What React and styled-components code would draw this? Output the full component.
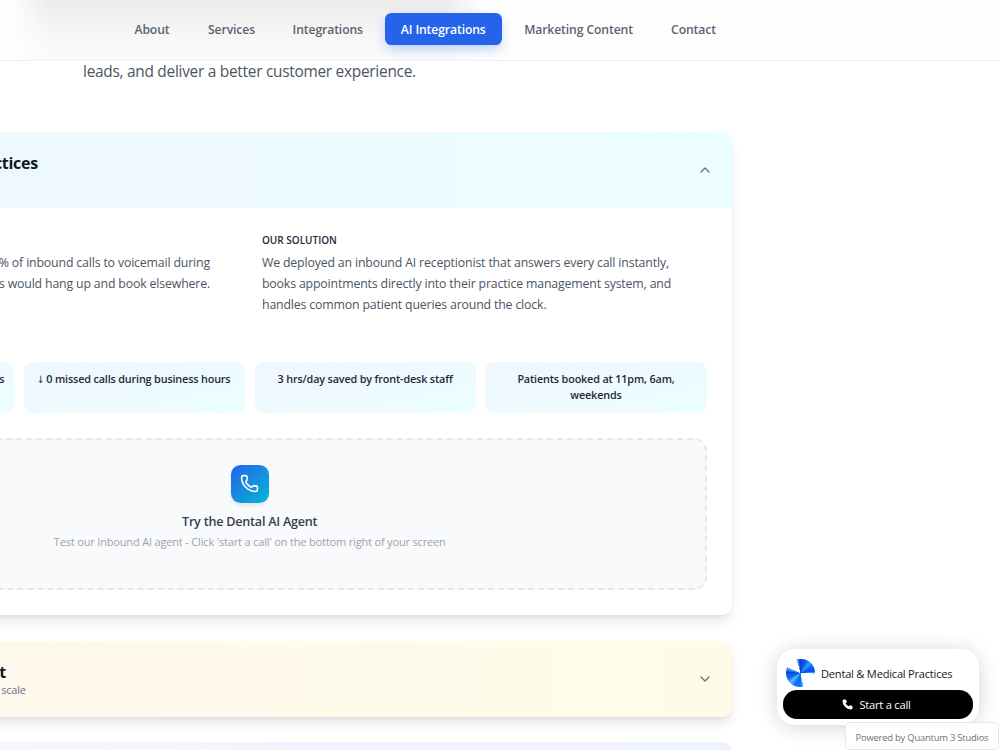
import React from 'react';
import styled, { createGlobalStyle } from 'styled-components';
import { ChevronDown, ChevronUp, Phone } from 'lucide-react';

const GlobalStyle = createGlobalStyle`
	* {
		box-sizing: border-box;
	}

	html, body {
		margin: 0;
		height: 750px;
		overflow: hidden;
		background: #ffffff;
	}

	body {
		font-family: "Segoe UI", "Open Sans", "Noto Sans", sans-serif;
		color: #4b5563;
	}

	p, h2, h3, h4 {
		margin: 0;
	}
`;

const Page = styled.div`
	width: 1000px;
	height: 750px;
	overflow: hidden;
`;

const Header = styled.header`
	position: relative;
	height: 61px;
	padding: 12.5px 0 0 118px;
	overflow: hidden;
	background: #fefefe;
	border-bottom: 1px solid #f0f1f3;

	&::before {
		content: "";
		position: absolute;
		left: 30px;
		top: -30px;
		width: 435px;
		height: 110px;
		background: linear-gradient(to bottom, #e9e9e9 24%, #f3f3f3 46%, #fafafa 70%, #fcfcfc);
		filter: blur(13px);
	}
`;

const Nav = styled.nav`
	position: relative;
	display: flex;
	gap: 6px;
`;

const NavLink = styled.a`
	display: flex;
	align-items: center;
	justify-content: center;
	width: ${p => p.$width}px;
	height: 32px;
	padding-top: 1px;
	border-radius: 6.4px;
	font-size: 12.2px;
	font-weight: 600;
	letter-spacing: -0.12px;
	white-space: nowrap;
	color: ${p => (p.$active ? '#ffffff' : '#5b6472')};
	background: ${p => (p.$active ? '#2563eb' : 'transparent')};
	box-shadow: ${p => (p.$active ? '0 5px 12px -1px rgba(37, 99, 235, 0.3)' : 'none')};
`;

const Intro = styled.p`
	height: 71px;
	padding: 0.6px 0 0 83px;
	font-size: 15.4px;
	line-height: 20px;
	letter-spacing: -0.26px;
	white-space: nowrap;
`;

const CardList = styled.main`
	display: flex;
	flex-direction: column;
	gap: 25.6px;
	width: 965px;
	margin-left: -232.8px;
`;

const Card = styled.section`
	flex: none;
	border-radius: 9.6px;
	overflow: hidden;
	background: #ffffff;
	box-shadow: 0 8px 12px -2.4px rgba(0, 0, 0, 0.1), 0 3.2px 4.8px -3.2px rgba(0, 0, 0, 0.1);
`;

const CardHead = styled.div`
	display: flex;
	align-items: center;
	justify-content: space-between;
	height: 76.1px;
	padding: 0 19.4px 0 25.6px;
	background: linear-gradient(to right, ${p => p.$from}, ${p => p.$to});
	color: #6b7280;
`;

const Heading = styled.div`
	display: flex;
	flex-direction: column;
	align-items: flex-end;
	align-self: flex-start;
	width: ${p => p.$width}px;
	padding-top: 20px;
	white-space: nowrap;
`;

const Title = styled.h2`
	font-size: 16px;
	line-height: 22px;
	font-weight: 700;
	letter-spacing: -0.3px;
	color: #111827;
`;

const Subtitle = styled.p`
	margin-right: -20px;
	font-size: 11px;
	line-height: 14px;
	letter-spacing: -0.2px;
	color: #6b7280;
`;

const CardBody = styled.div`
	height: 407px;
	padding: 25.6px;
`;

const Columns = styled.div`
	display: grid;
	grid-template-columns: 443.6px 443.6px;
	gap: 25.6px;
	height: 128px;
`;

const Column = styled.div`
	padding-right: ${p => (p.$clipped ? '26.4px' : '0')};
	text-align: ${p => (p.$clipped ? 'right' : 'left')};
	white-space: nowrap;
`;

const Label = styled.h4`
	font-size: 10px;
	line-height: 13px;
	font-weight: 600;
	letter-spacing: 0;
	color: #1f2937;
`;

const Line = styled.p`
	font-size: 12.3px;
	line-height: 20.6px;
	letter-spacing: -0.15px;

	${Label} + & {
		margin-top: 6.8px;
	}
`;

const Stats = styled.div`
	display: grid;
	grid-template-columns: repeat(4, 1fr);
	gap: 9.6px;
	height: 49.6px;
`;

const Stat = styled.div`
	padding: 9.6px;
	border-radius: 9px;
	background: linear-gradient(to bottom right, #eff6ff, #ecfeff);
	font-size: 10.8px;
	line-height: 16px;
	font-weight: 600;
	letter-spacing: -0.15px;
	text-align: ${p => (p.$clipped ? 'right' : 'center')};
	white-space: nowrap;
	color: #1f2937;
`;

const Arrow = styled.span`
	font-family: "DejaVu Sans Condensed", "DejaVu Sans", sans-serif;
	font-size: 10px;
	font-weight: 400;
	letter-spacing: -2px;
	margin: 0 1px 0 -1px;
`;

const Demo = styled.div`
	display: flex;
	flex-direction: column;
	align-items: center;
	height: 152.4px;
	margin-top: 26.4px;
	padding-top: 25px;
	border: 2px dashed #e5e7eb;
	border-radius: 12.8px;
	background: #f9fafb;
`;

const PhoneTile = styled.div`
	display: flex;
	align-items: center;
	justify-content: center;
	width: 38.4px;
	height: 38.4px;
	border-radius: 9.6px;
	background: linear-gradient(to bottom right, #2563eb, #06b6d4);
	color: #ffffff;
	box-shadow: 0 3px 5px -1px rgba(0, 0, 0, 0.1);
`;

const DemoTitle = styled.h3`
	margin-top: 9.4px;
	font-size: 12.6px;
	line-height: 20px;
	font-weight: 600;
	letter-spacing: -0.23px;
	color: #374151;
`;

const DemoText = styled.p`
	font-size: 11px;
	line-height: 20.6px;
	letter-spacing: -0.17px;
	color: #9ca3af;
`;

const Widget = styled.aside`
	position: absolute;
	left: 777px;
	top: 649px;
	width: 202px;
	height: 76px;
	padding: 9px 6px 6px;
	border-radius: 18px;
	background: #ffffff;
	box-shadow: 0 2px 20px rgba(0, 0, 0, 0.17);
`;

const WidgetHead = styled.div`
	display: flex;
	align-items: center;
	gap: 6.5px;
	height: 32.4px;
	padding: 0 0 2.4px 3px;
	font-size: 11.1px;
	letter-spacing: -0.22px;
	white-space: nowrap;
	color: #171717;
`;

const Orb = styled.div`
	width: 28.5px;
	height: 28.5px;
	border-radius: 50%;
	background: conic-gradient(
		from -17deg,
		#7cc4f5 0deg, #0a3fc4 14deg, #0a55ea 38deg, #2f9bff 60deg, #0868fa 76deg, #0050e6 100deg, #8fd3ff 109deg,
		transparent 110deg 184deg,
		#6cc5f5 185deg, #0d6df5 198deg, #0872ff 222deg, #67baff 246deg, #1273f4 260deg, #0648d4 290deg, #58b4fa 310deg,
		transparent 311deg
	);
`;

const CallButton = styled.button`
	display: flex;
	align-items: center;
	justify-content: center;
	gap: 6px;
	width: 190px;
	height: 28.2px;
	padding: 0 3px 0 0;
	border: none;
	border-radius: 14px;
	background: #000000;
	color: #ffffff;
	font-family: inherit;
	font-size: 11.2px;
	font-weight: 500;
	letter-spacing: -0.25px;
`;

const Powered = styled.div`
	position: absolute;
	left: 845px;
	top: 722px;
	width: 154px;
	height: 28px;
	border: 1px solid #e5e7eb;
	border-radius: 4px;
	background: #ffffff;
	color: #6b7280;
	font-size: 9.4px;
	line-height: 29px;
	letter-spacing: -0.2px;
	text-align: center;
	white-space: nowrap;
`;

const navItems = [
	{ label: 'About', width: 68 },
	{ label: 'Services', width: 79 },
	{ label: 'Integrations', width: 101.5 },
	{ label: 'AI Integrations', width: 117.5, active: true },
	{ label: 'Marketing Content', width: 141 },
	{ label: 'Contact', width: 77 },
];

const App = () => {
	return (
		<Page>
			<GlobalStyle />
			<Header>
				<Nav>
					{navItems.map(item => (
						<NavLink key={item.label} $width={item.width} $active={item.active}>{item.label}</NavLink>
					))}
				</Nav>
			</Header>
			<Intro>leads, and deliver a better customer experience.</Intro>
			<CardList>
				<Card>
					<CardHead $from="#eff6ff" $to="#ecfeff">
						<Heading $width={245}>
							<Title>Dental &amp; Medical Practices</Title>
						</Heading>
						<ChevronUp size={16} />
					</CardHead>
					<CardBody>
						<Columns>
							<Column $clipped>
								<Label>&nbsp;</Label>
								<Line>% of inbound calls to voicemail during</Line>
								<Line>s would hang up and book elsewhere.</Line>
							</Column>
							<Column>
								<Label>OUR SOLUTION</Label>
								<Line>We deployed an inbound AI receptionist that answers every call instantly,</Line>
								<Line>books appointments directly into their practice management system, and</Line>
								<Line>handles common patient queries around the clock.</Line>
							</Column>
						</Columns>
						<Stats>
							<Stat $clipped>s</Stat>
							<Stat><Arrow>↓</Arrow> 0 missed calls during business hours</Stat>
							<Stat>3 hrs/day saved by front-desk staff</Stat>
							<Stat>Patients booked at 11pm, 6am,<br />weekends</Stat>
						</Stats>
						<Demo>
							<PhoneTile><Phone size={19} strokeWidth={2} /></PhoneTile>
							<DemoTitle>Try the Dental AI Agent</DemoTitle>
							<DemoText>Test our Inbound AI agent - Click 'start a call' on the bottom right of your screen</DemoText>
						</Demo>
					</CardBody>
				</Card>
				<Card>
					<CardHead $from="#fff7ed" $to="#fefce8">
						<Heading $width={213}>
							<Title>t</Title>
							<Subtitle>scale</Subtitle>
						</Heading>
						<ChevronDown size={16} />
					</CardHead>
				</Card>
				<Card>
					<CardHead $from="#faf5ff" $to="#eef2ff" />
				</Card>
			</CardList>
			<Widget>
				<WidgetHead>
					<Orb />
					Dental &amp; Medical Practices
				</WidgetHead>
				<CallButton>
					<Phone size={11} fill="currentColor" />
					Start a call
				</CallButton>
			</Widget>
			<Powered>Powered by Quantum 3 Studios</Powered>
		</Page>
	);
};

export default App;
